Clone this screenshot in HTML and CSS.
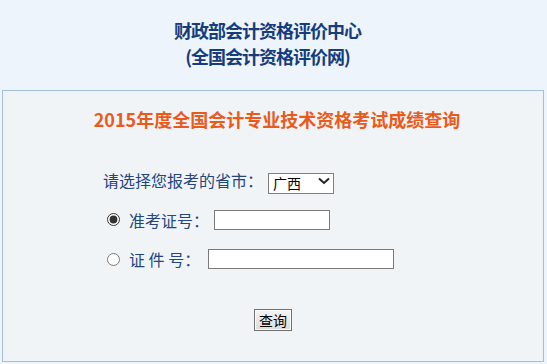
FILE: index.html
```html
<!DOCTYPE html>
<html lang="zh-CN">
<head>
<meta charset="utf-8">
<title>全国会计专业技术资格考试成绩查询</title>
<link rel="stylesheet" href="styles.css">
</head>
<body>
<div class="header">
  <div class="header-line">财政部会计资格评价中心</div>
  <div class="header-line">(全国会计资格评价网)</div>
</div>
<div class="box">
  <div class="title">2015年度全国会计专业技术资格考试成绩查询</div>
  <form class="form">
    <div class="row row-province">
      <span class="label">请选择您报考的省市：</span>
      <span class="select-wrap">
        <select class="select"><option>广西</option></select>
        <svg class="chevron" width="12" height="8" viewBox="0 0 12 8"><path d="M1 1.5 L6 6 L11 1.5" fill="none" stroke="#222" stroke-width="2"/></svg>
      </span>
    </div>
    <div class="row row-ticket">
      <input class="radio" type="radio" name="t" checked>
      <span class="label">准考证号：</span>
      <input class="text text-ticket" type="text">
    </div>
    <div class="row row-id">
      <input class="radio" type="radio" name="t">
      <span class="label">证&nbsp;件&nbsp;号：</span>
      <input class="text text-id" type="text">
    </div>
    <div class="actions">
      <button type="button" class="btn">查询</button>
    </div>
  </form>
</div>
</body>
</html>
```

FILE: styles.css
```css
html, body {
  margin: 0;
  padding: 0;
}
body {
  background: #edf4fb;
  font-family: "Noto Sans CJK SC", "Noto Sans", sans-serif;
  width: 547px;
  height: 364px;
  overflow: hidden;
}
.header {
  padding-top: 17px;
  text-align: center;
  color: #173c7c;
  font-weight: bold;
  font-size: 18px;
  letter-spacing: -1px;
  padding-right: 12px;
}
.header-line {
  line-height: 26px;
}
.box {
  margin: 21px 3px 0 2px;
  border: 1px solid #a3bfdb;
  background: #f0f4f7;
  height: 270px;
}
.title {
  margin-top: 14px;
  line-height: 28px;
  font-size: 18px;
  font-weight: bold;
  color: #ec5a1b;
  text-align: center;
  padding-left: 8px;
}
.form {
  margin: 27px 0 0 0;
  padding-left: 100px;
}
.row {
  display: flex;
  align-items: center;
  height: 40px;
  color: #23467f;
  font-size: 16px;
}
.row-ticket {
  height: 39px;
}
.label {
  white-space: nowrap;
  line-height: 20px;
}
.select-wrap {
  position: relative;
  display: inline-block;
  margin-left: 5px;
  height: 21px;
}
.select {
  appearance: none;
  -webkit-appearance: none;
  width: 66px;
  height: 21px;
  border: 1px solid #7f7f7f;
  border-radius: 0;
  background: #fff;
  font-family: "Noto Sans CJK SC", sans-serif;
  font-size: 14px;
  color: #000;
  padding: 0 0 0 4px;
  margin: 0;
  line-height: 19px;
}
.chevron {
  position: absolute;
  right: 4px;
  top: 7px;
  pointer-events: none;
}
.radio {
  margin: 0 9px 0 4px;
  width: 13px;
  height: 13px;
  accent-color: #333;
}
.text {
  height: 20px;
  box-sizing: border-box;
  border: 1px solid #7a7a7a;
  background: #fff;
  padding: 0;
  margin: 0 0 0 5px;
}
.text-ticket {
  width: 116px;
}
.text-id {
  width: 186px;
  margin-left: 8px;
}
.actions {
  margin-top: 28px;
  padding-left: 151px;
}
.btn {
  width: 38px;
  height: 22px;
  padding: 0;
  border: 1px solid #707070;
  border-radius: 0;
  background: linear-gradient(#f4f4f4, #dcdcdc);
  box-shadow: inset 0 0 0 1px #fbfbfb;
  font-family: "Noto Sans CJK SC", sans-serif;
  font-size: 14px;
  color: #000;
  line-height: 20px;
}
```
